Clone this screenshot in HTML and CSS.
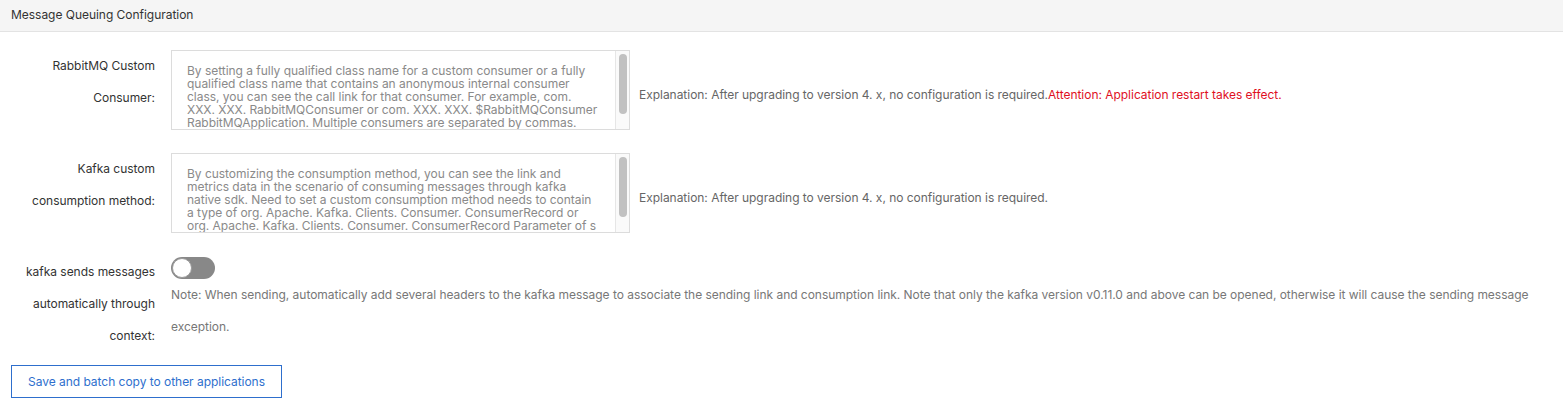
FILE: index.html
```html
<!DOCTYPE html>
<html>
<head>
<meta charset="utf-8">
<link rel="stylesheet" href="styles.css">
</head>
<body>
<div class="panel-header">Message Queuing Configuration</div>
<div class="form">
  <div class="row">
    <div class="label">RabbitMQ Custom<br>Consumer:</div>
    <div class="control">
      <div class="textbox">
        <div class="textbox-text">By setting a fully qualified class name for a custom consumer or a fully qualified class name that contains an anonymous internal consumer class, you can see the call link for that consumer. For example, com. XXX. XXX. RabbitMQConsumer or com. XXX. XXX. $RabbitMQConsumer RabbitMQApplication. Multiple consumers are separated by commas.</div>
        <div class="scrollbar"><div class="thumb"></div></div>
      </div>
      <div class="help">Explanation: After upgrading to version 4. x, no configuration is required.<span class="warn">Attention: Application restart takes effect.</span></div>
    </div>
  </div>
  <div class="row">
    <div class="label">Kafka custom<br>consumption method:</div>
    <div class="control">
      <div class="textbox">
        <div class="textbox-text">By customizing the consumption method, you can see the link and metrics data in the scenario of consuming messages through kafka native sdk. Need to set a custom consumption method needs to contain a type of org. Apache. Kafka. Clients. Consumer. ConsumerRecord or org. Apache. Kafka. Clients. Consumer. ConsumerRecord Parameter of s</div>
        <div class="scrollbar"><div class="thumb"></div></div>
      </div>
      <div class="help">Explanation: After upgrading to version 4. x, no configuration is required.</div>
    </div>
  </div>
  <div class="row">
    <div class="label">kafka sends messages<br>automatically through<br>context:</div>
    <div class="control-col">
      <div class="switch"><div class="knob"></div></div>
      <div class="note">Note: When sending, automatically add several headers to the kafka message to associate the sending link and consumption link. Note that only the kafka version v0.11.0 and above can be opened, otherwise it will cause the sending message exception.</div>
    </div>
  </div>
  <button class="btn">Save and batch copy to other applications</button>
</div>
</body>
</html>
```
FILE: styles.css
```css
html, body {
  margin: 0;
  padding: 0;
  background: #fff;
  font-family: Inter, Roboto, "Liberation Sans", sans-serif;
  font-size: 12px;
  letter-spacing: -0.03px;
  color: #333;
}
.panel-header {
  height: 31px;
  line-height: 30px;
  padding-left: 11px;
  background: #f5f5f5;
  border-bottom: 1px solid #e3e3e3;
  color: #333;
  font-size: 12px;
}
.form {
  padding: 18px 20px 10px 11px;
}
.row {
  display: flex;
  margin-bottom: 23px;
}
.label {
  width: 144px;
  flex: none;
  text-align: right;
  line-height: 32px;
  color: #333;
}
.control {
  margin-left: 16px;
  display: flex;
  align-items: center;
}
.control-col {
  margin-left: 16px;
  display: flex;
  flex-direction: column;
  flex: 1;
  padding-top: 1px;
}
.textbox {
  width: 457px;
  height: 78px;
  border: 1px solid #dcdcdc;
  display: flex;
  overflow: hidden;
  flex: none;
}
.textbox-text {
  flex: 1;
  padding: 13px 14px 0 15px;
  line-height: 13px;
  color: #8a8a8a;
}
.scrollbar {
  width: 14px;
  border-left: 1px solid #e6e6e6;
  background: #fafafa;
  padding-top: 3px;
  box-sizing: border-box;
  display: flex;
  justify-content: center;
}
.thumb {
  width: 8px;
  height: 60px;
  border-radius: 4px;
  background: #c1c1c1;
}
.help {
  margin-left: 9px;
  padding-top: 9px;
  color: #666;
}
.warn {
  color: #e0101f;
}
.switch {
  width: 44px;
  height: 22px;
  border-radius: 11px;
  background: #888;
  position: relative;
}
.knob {
  position: absolute;
  left: 1px;
  top: 1px;
  width: 18px;
  height: 18px;
  border-radius: 50%;
  background: #fff;
  border: 1px solid #9a9a9a;
}
.note {
  line-height: 32px;
  color: #777;
}
.btn {
  display: block;
  margin-top: -10px;
  width: 271px;
  height: 33px;
  border: 1px solid #2e6fcd;
  background: #fff;
  color: #2e6fcd;
  font-family: Inter, Roboto, "Liberation Sans", sans-serif;
  font-size: 12px;
  letter-spacing: -0.03px;
  padding: 0;
  cursor: pointer;
}
```
